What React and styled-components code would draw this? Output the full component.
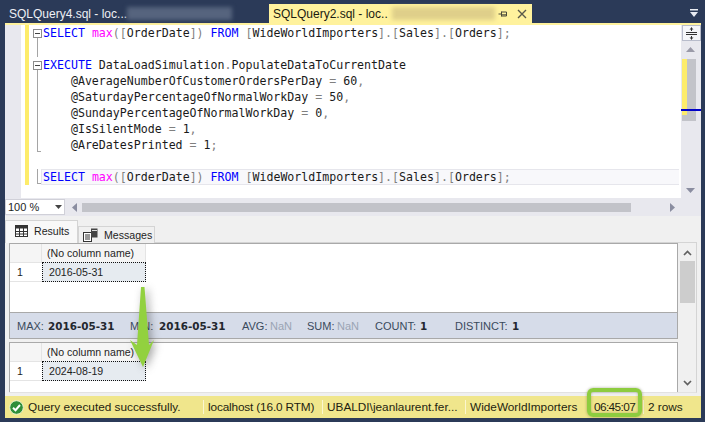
import React from 'react'
import styled, { createGlobalStyle } from 'styled-components'

const GlobalStyle = createGlobalStyle`
  html, body { margin: 0; padding: 0; background: #2b3a58; }
  * { box-sizing: border-box; }
`

const Window = styled.div`
  position: relative;
  width: 705px;
  height: 422px;
  background: #2b3a58;
  padding: 4px 4px 4px 5px;
  display: flex;
  flex-direction: column;
  font-family: 'Liberation Sans', Arial, sans-serif;
  overflow: hidden;
`

const TabStrip = styled.div`
  height: 19px;
  display: flex;
  align-items: stretch;
  flex: none;
`

const DocTab = styled.div`
  width: ${p => p.$w}px;
  flex: none;
  display: flex;
  align-items: center;
  padding-left: 4px;
  font-size: 12px;
  white-space: nowrap;
  color: ${p => (p.$active ? '#1a1a10' : '#eef0f5')};
  background: ${p => (p.$active ? '#fff29d' : 'transparent')};
`

const Blur = styled.div`
  width: ${p => p.$w}px;
  height: 13px;
  margin-left: ${p => p.$ml}px;
  background: ${p => p.$c};
  filter: blur(2px);
`

const TabButtons = styled.div`
  margin-left: auto;
  display: flex;
  align-items: center;
  gap: 9px;
  padding-right: 5px;
`

const OverflowBtn = styled.div`
  margin-left: auto;
  padding: 5px 3px 0 0;
  line-height: 0;
`

const EditorArea = styled.div`
  height: 175px;
  flex: none;
  background: #e8e8ee;
  border-top: 2px solid #fff29d;
  display: flex;
`

const Gutter = styled.div`
  width: 16px;
  flex: none;
`

const ChangeBar = styled.div`
  width: 8px;
  flex: none;
  background: #fff;
  padding-left: 4px;
`

const YellowMark = styled.div`
  height: 160px;
  background: #fdec6a;
`

const Code = styled.div`
  flex: 1;
  background: #fff;
`

const Line = styled.div`
  height: 16px;
  display: flex;
`

const FoldCol = styled.div`
  width: 12px;
  flex: none;
  position: relative;
`

const FoldLine = styled.span`
  position: absolute;
  left: 8px;
  top: 0;
  width: ${p => (p.$end ? 4 : 1)}px;
  height: ${p => (p.$end ? 15 : 16)}px;
  border-left: 1px solid #a5a5a5;
  border-bottom: ${p => (p.$end ? '1px solid #a5a5a5' : 'none')};
`

const FoldBox = styled.span`
  position: absolute;
  left: 4px;
  top: 4px;
  width: 9px;
  height: 9px;
  border: 1px solid #8c8c8c;
  background: #fff;
  &::after {
    content: '';
    position: absolute;
    left: 1px;
    right: 1px;
    top: 3px;
    height: 1px;
    background: #444;
  }
`

const FoldTail = styled.span`
  position: absolute;
  left: 8px;
  top: 13px;
  width: 1px;
  height: 3px;
  background: #a5a5a5;
`

const LineText = styled.div`
  flex: 1;
  height: 16px;
  line-height: 16px;
  white-space: pre;
  font-family: 'DejaVu Sans Mono', 'Liberation Mono', monospace;
  font-size: 11.6px;
  color: #1a1a1a;
  padding-left: 2px;
  ${p => p.$current && `
    margin-right: 2px;
    padding-left: 1px;
    background: #f8f8fb;
    border: 1px solid #e6e6ec;
    border-right: none;
    line-height: 14px;
  `}
`

const Kw = styled.span`color: #0000ff;`
const Fn = styled.span`color: #ff00ff;`
const Pn = styled.span`color: #808080;`

const SplitRail = styled.div`
  width: 20px;
  flex: none;
  display: flex;
  flex-direction: column;
  align-items: flex-start;
`

const SplitBtn = styled.div`
  width: 19px;
  height: 16px;
  margin-left: 1px;
  border: 1px solid #b8bccb;
  background: #f5f6f9;
  display: flex;
  align-items: center;
  justify-content: center;
`

const RailArrow = styled.div`
  margin-left: 5px;
  margin-top: ${p => (p.$down ? 'auto' : '6px')};
  margin-bottom: ${p => (p.$down ? '5px' : '0')};
  line-height: 0;
`

const ThumbTrack = styled.div`
  width: 14px;
  height: 62px;
  margin: 7px 0 0 1px;
  background: #c2c3c9;
  position: relative;
  flex: none;
`

const RailMark = styled.div`
  width: 5px;
  height: 56px;
  background: #fdec6a;
`

const BlueMark = styled.div`
  position: absolute;
  left: -1px;
  right: -5px;
  top: 50px;
  height: 2px;
  background: #0000c8;
`

const ZoomRow = styled.div`
  height: 18px;
  flex: none;
  background: #e8e8ee;
  display: flex;
  align-items: center;
`

const ZoomBox = styled.div`
  width: 60px;
  height: 16px;
  flex: none;
  background: #fff;
  border: 1px solid #d0d0d8;
  font-size: 11px;
  color: #1e1e1e;
  display: flex;
  align-items: center;
  justify-content: space-between;
  padding: 0 2px 0 2px;
`

const HScroll = styled.div`
  flex: 1;
  display: flex;
  align-items: center;
  padding: 0 26px 0 7px;
  gap: 5px;
`

const HThumb = styled.div`
  width: 549px;
  height: 9px;
  background: #c2c3c9;
  margin-right: auto;
`

const ResultsPane = styled.div`
  flex: 1;
  background: #f0f0f0;
  display: flex;
  flex-direction: column;
  min-height: 0;
`

const ResultTabs = styled.div`
  height: 26px;
  flex: none;
  display: flex;
  align-items: flex-end;
`

const ResultTab = styled.div`
  position: relative;
  z-index: 1;
  margin-bottom: -1px;
  display: flex;
  align-items: center;
  font-size: 10.6px;
  color: #1e1e1e;
  gap: ${p => p.$gap}px;
  height: ${p => (p.$active ? 23 : 17)}px;
  width: ${p => p.$w}px;
  padding: 0 0 ${p => (p.$active ? 3 : 0)}px ${p => p.$pad}px;
  background: ${p => (p.$active ? '#f8f8f8' : '#f0f0f0')};
  border: 1px solid #d4d4d4;
  border-bottom: none;
  flex: none;
`

const GridPane = styled.div`
  flex: 1;
  min-height: 0;
  margin: 0 4px 3px 4px;
  border-top: 1px solid #d4d4d4;
  border-right: 1px solid #d4d4d4;
  border-bottom: 1px solid #e2e2e2;
  display: flex;
`

const GridStack = styled.div`
  flex: 1;
  min-width: 0;
  display: flex;
  flex-direction: column;
`

const Grid = styled.div`
  height: ${p => p.$h}px;
  flex: ${p => (p.$fill ? 1 : 'none')};
  background: #fff;
  border-top: 1px solid #a9a9a9;
  border-left: 1px solid #a9a9a9;
  border-right: 1px solid #a9a9a9;
  font-size: 10.6px;
  color: #1e1e1e;
`

const GridRow = styled.div`
  display: flex;
  height: 20px;
`

const HeaderRow = styled(GridRow)`
  height: 18px;
`

const Corner = styled.div`
  width: 32px;
  flex: none;
  background: #f5f5f5;
  border-right: 1px solid #e4e4e4;
`

const ColHead = styled.div`
  width: 104px;
  flex: none;
  background: #f5f5f5;
  border-right: 1px solid #e4e4e4;
  padding-left: 5px;
  line-height: 18px;
`

const RowNum = styled.div`
  width: 32px;
  flex: none;
  line-height: 19px;
  padding-left: 7px;
  border-top: 1px solid #e4e4e4;
  border-bottom: 1px solid #e4e4e4;
`

const Cell = styled.div`
  width: 104px;
  flex: none;
  background: #e6ebf0;
  border: 1px dotted #111;
  line-height: 18px;
  padding-left: 6px;
`

const StatsBar = styled.div`
  height: 27px;
  flex: none;
  background: #d6dce9;
  border: 1px solid #a9a9a9;
  margin-bottom: 3px;
  display: flex;
  align-items: center;
  padding-left: 7px;
  font-size: 11px;
  color: #3a4a5c;
`

const Stat = styled.div`
  width: ${p => p.$w}px;
  flex: none;
  display: flex;
  align-items: center;
`

const StatLabel = styled.span`
  width: ${p => p.$w}px;
  flex: none;
`

const StatValue = styled.b`
  font-family: 'DejaVu Sans', Verdana, sans-serif;
  font-size: 10.4px;
  color: #23272e;
`

const StatNaN = styled.span`
  color: #9aa4b4;
`

const VScroll = styled.div`
  width: 18px;
  flex: none;
  background: #f0f0f0;
  display: flex;
  flex-direction: column;
  align-items: center;
  padding: 7px 0 6px;
`

const VThumb = styled.div`
  width: 15px;
  height: 42px;
  margin: 5px 0 auto;
  background: #cdcdcd;
`

const StatusBar = styled.div`
  height: 22px;
  flex: none;
  background: #f0e68c;
  display: flex;
  align-items: center;
  font-size: 11.8px;
  color: #1e1e10;
  position: relative;
  white-space: pre;
`

const StatusIcon = styled.svg`
  margin-left: 4px;
  flex: none;
`

const StatusCell = styled.div`
  width: ${p => p.$w}px;
  flex: none;
  padding-left: ${p => p.$pad ?? 4}px;
  border-right: ${p => (p.$sep ? '1px solid #fbf6cf' : 'none')};
  letter-spacing: ${p => p.$track ?? 0}px;
  height: 14px;
  display: flex;
  align-items: center;
`

const TimeHighlight = styled.div`
  position: absolute;
  left: 582px;
  top: -8px;
  width: 55px;
  height: 29px;
  border: 4px solid #8dcc3f;
  border-radius: 6px;
  box-shadow: 0 0 3px rgba(70, 70, 30, 0.45), inset 0 0 3px rgba(70, 70, 30, 0.35);
`

const ArrowSvg = styled.svg`
  position: absolute;
  left: 125px;
  top: 282px;
  filter: drop-shadow(3px 2px 4px rgba(60, 60, 60, 0.45));
`

const PinIcon = () => (
  <svg width="10" height="10" viewBox="0 0 10 10">
    <path d="M0.5 5H3.5M3.5 2.5V7.5M3.5 3H8.5V7H3.5M3.5 5.8H8.5" fill="none" stroke="#4a4a3a" strokeWidth="1" />
  </svg>
)

const CloseIcon = () => (
  <svg width="10" height="10" viewBox="0 0 10 10">
    <path d="M1 1L9 9M9 1L1 9" stroke="#5a5a4a" strokeWidth="1.4" />
  </svg>
)

const OverflowIcon = () => (
  <svg width="8" height="8" viewBox="0 0 8 8">
    <path d="M0 0H8V1.5H0ZM0 3H8L4 8Z" fill="#e8ebf2" />
  </svg>
)

const SplitIcon = () => (
  <svg width="11" height="13" viewBox="0 0 11 13">
    <path d="M0 5.5H11M0 7.5H11" stroke="#333" strokeWidth="1" />
    <path d="M5.5 0.5V4M5.5 9V12.5" stroke="#333" strokeWidth="1" />
    <path d="M3.5 2.5L5.5 0.5L7.5 2.5ZM3.5 10.5L5.5 12.5L7.5 10.5Z" fill="#333" />
  </svg>
)

const GridIcon = () => (
  <svg width="13" height="12" viewBox="0 0 13 12">
    <rect x="0.5" y="0.5" width="12" height="11" fill="#fff" stroke="#333" />
    <rect x="0.5" y="0.5" width="12" height="3" fill="#333" />
    <path d="M4.5 3V11.5M8.5 3V11.5M0.5 6.5H12.5M0.5 9H12.5" stroke="#333" strokeWidth="1" />
  </svg>
)

const MessagesIcon = () => (
  <svg width="15" height="14" viewBox="0 0 15 14">
    <rect x="0.5" y="4.5" width="8" height="9" fill="#fff" stroke="#333" />
    <path d="M2 7H7M2 9H7M2 11H7" stroke="#333" strokeWidth="1" />
    <rect x="8" y="0.5" width="6.5" height="9" fill="#444" />
    <path d="M9 2.5H14" stroke="#ddd" strokeWidth="1" />
  </svg>
)

const Triangle = ({ d, w, h, c = '#8a8da0' }) => (
  <svg width={w} height={h} viewBox={`0 0 ${w} ${h}`} style={{ flex: 'none' }}>
    <path d={d} fill={c} />
  </svg>
)

const Chevron = ({ up }) => (
  <svg width="9" height="6" viewBox="0 0 9 6">
    <path d={up ? 'M1 5L4.5 1.5L8 5' : 'M1 1L4.5 4.5L8 1'} fill="none" stroke="#606060" strokeWidth="1.7" />
  </svg>
)

const SELECT_LINE = (
  <>
    <Kw>SELECT</Kw> <Fn>max</Fn><Pn>(</Pn><Pn>[</Pn>OrderDate<Pn>]</Pn><Pn>)</Pn> <Kw>FROM</Kw> <Pn>[</Pn>WideWorldImporters<Pn>]</Pn><Pn>.</Pn><Pn>[</Pn>Sales<Pn>]</Pn><Pn>.</Pn><Pn>[</Pn>Orders<Pn>]</Pn><Pn>;</Pn>
  </>
)

const params = [
  ['@AverageNumberOfCustomerOrdersPerDay', '60', ',', 'line'],
  ['@SaturdayPercentageOfNormalWorkDay', '50', ',', 'line'],
  ['@SundayPercentageOfNormalWorkDay', '0', ',', 'line'],
  ['@IsSilentMode', '1', ',', 'line'],
  ['@AreDatesPrinted', '1', ';', 'end'],
]

const CodeLine = ({ fold, current, children }) => (
  <Line>
    <FoldCol>
      {fold === 'box' && <><FoldBox /><FoldTail /></>}
      {fold === 'line' && <FoldLine />}
      {fold === 'end' && <FoldLine $end />}
    </FoldCol>
    <LineText $current={current}>{children}</LineText>
  </Line>
)

const ResultGrid = ({ value, h, fill }) => (
  <Grid $h={h} $fill={fill}>
    <HeaderRow>
      <Corner />
      <ColHead>(No column name)</ColHead>
    </HeaderRow>
    <GridRow>
      <RowNum>1</RowNum>
      <Cell>{value}</Cell>
    </GridRow>
  </Grid>
)

export default function App() {
  return (
    <>
      <GlobalStyle />
      <Window>
        <TabStrip>
          <DocTab $w={264}>
            SQLQuery4.sql - loc...
            <Blur $w={105} $ml={0} $c="#56647e" />
          </DocTab>
          <DocTab $w={263} $active>
            SQLQuery2.sql - loc..
            <Blur $w={103} $ml={4} $c="#dfcf8a" />
            <TabButtons>
              <PinIcon />
              <CloseIcon />
            </TabButtons>
          </DocTab>
          <OverflowBtn><OverflowIcon /></OverflowBtn>
        </TabStrip>
        <EditorArea>
          <Gutter />
          <ChangeBar><YellowMark /></ChangeBar>
          <Code>
            <CodeLine fold="box">{SELECT_LINE}</CodeLine>
            <CodeLine fold="line" />
            <CodeLine fold="box"><Kw>EXECUTE</Kw> DataLoadSimulation<Pn>.</Pn>PopulateDataToCurrentDate</CodeLine>
            {params.map(([name, val, end, fold]) => (
              <CodeLine key={name} fold={fold}>{'    '}{name} <Pn>=</Pn> {val}<Pn>{end}</Pn></CodeLine>
            ))}
            <CodeLine />
            <CodeLine fold="end" current>{SELECT_LINE}</CodeLine>
          </Code>
          <SplitRail>
            <SplitBtn><SplitIcon /></SplitBtn>
            <RailArrow><Triangle w={9} h={5} d="M4.5 0L9 5H0Z" c="#9a9aa8" /></RailArrow>
            <ThumbTrack>
              <RailMark />
              <BlueMark />
            </ThumbTrack>
            <RailArrow $down><Triangle w={9} h={5} d="M0 0H9L4.5 5Z" /></RailArrow>
          </SplitRail>
        </EditorArea>
        <ZoomRow>
          <ZoomBox>100 %<Triangle w={7} h={4} d="M0 0H7L3.5 4Z" c="#444" /></ZoomBox>
          <HScroll>
            <Triangle w={5} h={9} d="M5 0V9L0 4.5Z" />
            <HThumb />
            <Triangle w={5} h={9} d="M0 0V9L5 4.5Z" />
          </HScroll>
        </ZoomRow>
        <ResultsPane>
          <ResultTabs>
            <ResultTab $active $w={73} $pad={9} $gap={6}><GridIcon />Results</ResultTab>
            <ResultTab $w={77} $pad={4} $gap={6}><MessagesIcon />Messages</ResultTab>
          </ResultTabs>
          <GridPane>
            <GridStack>
              <ResultGrid value="2016-05-31" h={69} />
              <StatsBar>
                <Stat $w={113}><StatLabel $w={31}>MAX:</StatLabel><StatValue>2016-05-31</StatValue></Stat>
                <Stat $w={112}><StatLabel $w={29}>MIN:</StatLabel><StatValue>2016-05-31</StatValue></Stat>
                <Stat $w={65}><StatLabel $w={28}>AVG:</StatLabel><StatNaN>NaN</StatNaN></Stat>
                <Stat $w={68}><StatLabel $w={30}>SUM:</StatLabel><StatNaN>NaN</StatNaN></Stat>
                <Stat $w={80}><StatLabel $w={45}>COUNT:</StatLabel><StatValue>1</StatValue></Stat>
                <Stat $w={80}><StatLabel $w={57}>DISTINCT:</StatLabel><StatValue>1</StatValue></Stat>
              </StatsBar>
              <ResultGrid value="2024-08-19" fill />
            </GridStack>
            <VScroll>
              <Chevron up />
              <VThumb />
              <Chevron />
            </VScroll>
          </GridPane>
        </ResultsPane>
        <StatusBar>
          <StatusIcon width="15" height="15" viewBox="0 0 15 15">
            <circle cx="7.5" cy="7.5" r="6.8" fill="#2f8f3a" stroke="#e8f2d0" strokeWidth="1" />
            <path d="M4 7.8L6.5 10.2L11 5" fill="none" stroke="#fff" strokeWidth="2" />
          </StatusIcon>
          <StatusCell $w={180} $sep>Query executed successfully.</StatusCell>
          <StatusCell $w={119} $sep $track={-0.15}>localhost (16.0 RTM)</StatusCell>
          <StatusCell $w={143} $sep>UBALDI\jeanlaurent.fer...</StatusCell>
          <StatusCell $w={121}>WideWorldImporters</StatusCell>
          <StatusCell $w={57} $pad={7} $sep $track={-0.6}>06:45:07</StatusCell>
          <StatusCell $w={40}>2 rows</StatusCell>
          <TimeHighlight />
        </StatusBar>
        <ArrowSvg width="36" height="90" viewBox="0 0 36 90">
          <path d="M16 5H19.5L24 63L29 58L18 85L5 58L12 63Z" fill="#92d13f" />
        </ArrowSvg>
      </Window>
    </>
  )
}
